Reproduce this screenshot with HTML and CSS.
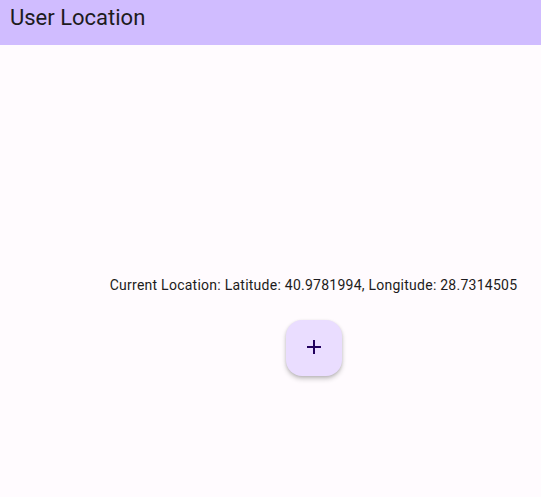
FILE: index.html
```html
<!DOCTYPE html>
<html>
<head>
<meta charset="utf-8">
<link rel="stylesheet" href="styles.css">
</head>
<body>
<header class="appbar"><h1 class="title">User Location</h1></header>
<main class="content">
  <p class="location">Current Location: Latitude: 40.9781994, Longitude: 28.7314505</p>
  <button class="fab" aria-label="Add">
    <svg width="24" height="24" viewBox="0 0 24 24"><path d="M19 13h-6v6h-2v-6H5v-2h6V5h2v6h6v2z" fill="#21005d"/></svg>
  </button>
</main>
</body>
</html>
```
FILE: styles.css
```css
html, body { margin: 0; padding: 0; }
body {
  background: #fffbfe;
  font-family: Roboto, "Noto Sans", sans-serif;
  color: #1d1b20;
  height: 497px;
  overflow: hidden;
}
.appbar {
  background: #d0bcff;
  height: 45px;
  display: flex;
  align-items: flex-start;
  padding-left: 10px;
}
.title {
  margin: 0;
  padding-top: 4px;
  font-size: 22px;
  font-weight: 400;
  line-height: 28px;
}
.content {
  display: flex;
  flex-direction: column;
  align-items: center;
  padding-left: 86px;
  padding-top: 230px;
}
.location {
  margin: 0;
  font-size: 14px;
  line-height: 20px;
  letter-spacing: 0.25px;
  color: #1d1b20;
}
.fab {
  margin-top: 25px;
  width: 56px;
  height: 56px;
  border: none;
  border-radius: 16px;
  background: #eaddff;
  display: flex;
  align-items: center;
  justify-content: center;
  padding: 0 0 2px 0;
  box-shadow: 0 3px 5px rgba(0,0,0,0.2), 0 1px 3px rgba(0,0,0,0.12);
}
```
